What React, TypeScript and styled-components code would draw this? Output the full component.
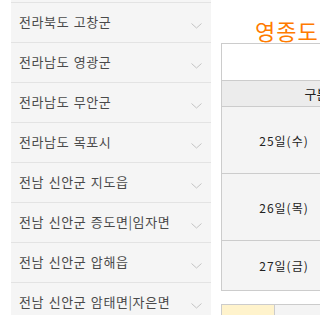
import React from "react";
import styled, { createGlobalStyle } from "styled-components";

const Global = createGlobalStyle`
  html, body { margin: 0; padding: 0; background: #fff; overflow: hidden; }
  body { font-family: "Noto Sans CJK KR", "Noto Sans", sans-serif; }
`;

const Page = styled.div`
  display: flex;
  align-items: flex-start;
  width: 320px;
  height: 315px;
  overflow: hidden;
`;

const Side = styled.ul`
  list-style: none;
  margin: 0 0 0 11px;
  padding: 2px 0 0;
  width: 200px;
  flex: none;
  height: 315px;
  background: #f5f5f5;
  box-sizing: border-box;
`;

const Item = styled.li`
  display: flex;
  justify-content: space-between;
  align-items: flex-start;
  height: 40px;
  box-sizing: border-box;
  border-top: 1px solid #e3e3e3;
  padding: 11px 9px 0 8px;
  font-size: 13px;
  line-height: 16px;
  letter-spacing: 0.6px;
  word-spacing: 1px;
  color: #4a4a4a;
  white-space: nowrap;
`;

const Chevron = styled.svg`
  flex: none;
  margin-top: 9px;
`;

const Main = styled.div`
  margin-left: 10px;
  flex: none;
  width: 420px;
`;

const Title = styled.h2`
  margin: 0;
  padding: 17px 0 0 34px;
  height: 43px;
  box-sizing: border-box;
  font-size: 22px;
  line-height: 26px;
  font-weight: normal;
  color: #ff7b00;
  letter-spacing: 1px;
  white-space: nowrap;
`;

const Table = styled.table`
  border-collapse: collapse;
  width: 420px;
  font-size: 12px;
  color: #222;
`;

const Cell = styled.td<{ $h: number; $bg?: string; $w?: number }>`
  border: 1px solid #cccccc;
  height: ${(p) => p.$h}px;
  width: ${(p) => (p.$w ? `${p.$w}px` : "auto")};
  padding: 0;
  background: ${(p) => p.$bg || "#f4f4f4"};
  text-align: center;
  vertical-align: middle;
  white-space: nowrap;
  letter-spacing: 1px;
`;

const Head = styled.th`
  border: 1px solid #cccccc;
  height: 25px;
  padding: 0;
  background: #ececec;
  font-weight: normal;
  font-size: 13px;
  color: #222;
  text-align: center;
`;

const Gap = styled.div`
  height: 13px;
`;

const SubTable = styled.table`
  border-collapse: collapse;
  width: 420px;
`;

const SubCell = styled.td<{ $bg: string; $w?: number }>`
  border: 1px solid #cccccc;
  height: 30px;
  padding: 0;
  background: ${(p) => p.$bg};
  width: ${(p) => (p.$w ? `${p.$w}px` : "auto")};
`;

const items = [
  "전라북도 고창군",
  "전라남도 영광군",
  "전라남도 무안군",
  "전라남도 목포시",
  "전남 신안군 지도읍",
  "전남 신안군 증도면|임자면",
  "전남 신안군 압해읍",
  "전남 신안군 암태면|자은면",
];

const rows = [
  { d: "25일(수)", h: 66 },
  { d: "26일(목)", h: 66 },
  { d: "27일(금)", h: 49 },
];

export default function App() {
  return (
    <Page>
      <Global />
      <Side>
        {items.map((t) => (
          <Item key={t}>
            <span>{t}</span>
            <Chevron width="11" height="6" viewBox="0 0 11 6">
              <polyline points="0.5,0.5 5.5,5 10.5,0.5" fill="none" stroke="#c4c4c4" strokeWidth="1" />
            </Chevron>
          </Item>
        ))}
      </Side>
      <Main>
        <Title>영종도 물때표</Title>
        <Table>
          <tbody>
            <tr>
              <Cell $h={36} $bg="#ffffff" colSpan={3}></Cell>
            </tr>
            <tr>
              <Head colSpan={2}>구분</Head>
              <Head></Head>
            </tr>
            {rows.map((r) => (
              <tr key={r.d}>
                <Cell $h={r.h} $w={124}>{r.d}</Cell>
                <Cell $h={r.h} $w={64}></Cell>
                <Cell $h={r.h}></Cell>
              </tr>
            ))}
          </tbody>
        </Table>
        <Gap />
        <SubTable>
          <tbody>
            <tr>
              <SubCell $bg="#fff3cc" $w={52}></SubCell>
              <SubCell $bg="#f4f4f4"></SubCell>
            </tr>
          </tbody>
        </SubTable>
      </Main>
    </Page>
  );
}
